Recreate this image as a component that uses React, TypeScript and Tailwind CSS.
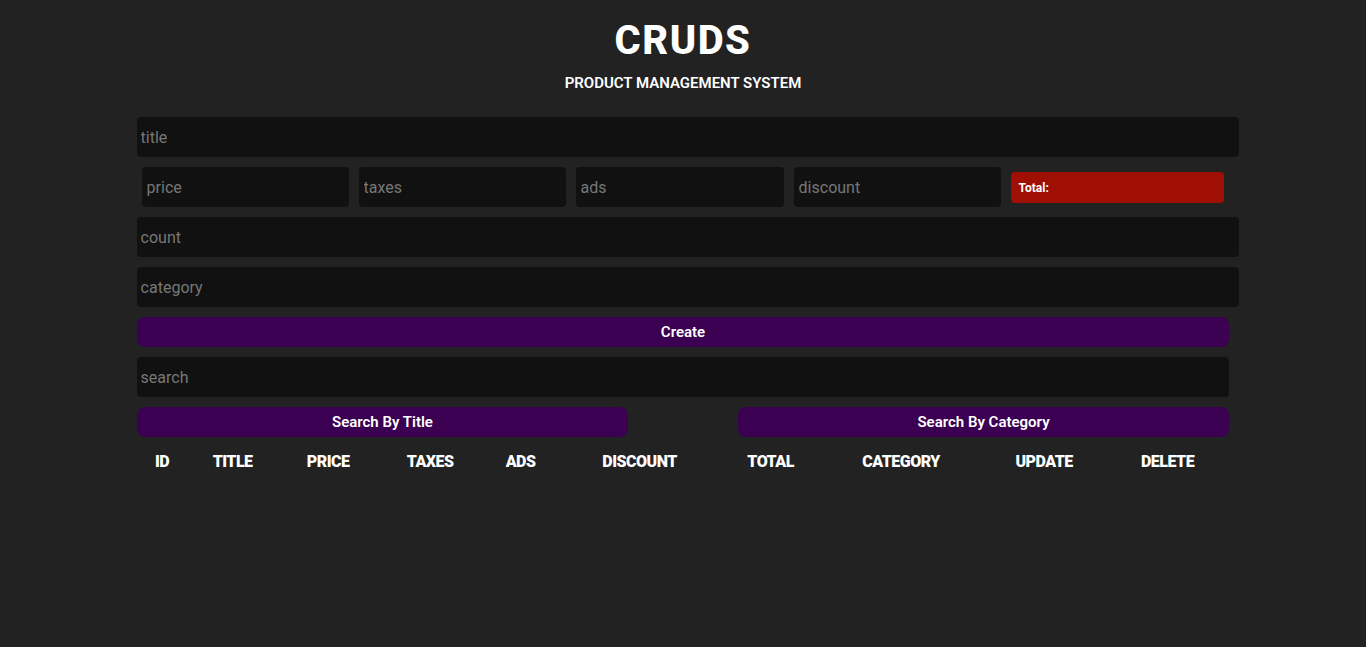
import { useState } from "react"

const cols = [
    { label: "ID", w: "w-[51px]" },
    { label: "TITLE", w: "w-[90px]" },
    { label: "PRICE", w: "w-[101px]" },
    { label: "TAXES", w: "w-[103px]" },
    { label: "ADS", w: "w-[78px]" },
    { label: "DISCOUNT", w: "w-[160px]" },
    { label: "TOTAL", w: "w-[102px]" },
    { label: "CATEGORY", w: "w-[159px]" },
    { label: "UPDATE", w: "w-[127px]" },
    { label: "DELETE", w: "w-[120px]" },
]

const inputCls = "h-10 rounded-[4px] bg-[#111111] px-1 text-base text-white placeholder:text-[#777777] outline-none"

export default function App() {
    const [search, setSearch] = useState("")

    return (
        <main className="min-h-[647px] bg-[#222222] text-white font-['Roboto',sans-serif] pt-[19px]">
            <header className="text-center">
                <h1 className="text-[40px] leading-[44px] font-extrabold tracking-[1.5px]">CRUDS</h1>
                <p className="mt-[10px] text-[15px] leading-5 font-semibold">PRODUCT MANAGEMENT SYSTEM</p>
            </header>

            <section className="w-[80%] mx-auto mt-[24px]">
                <input className={`${inputCls} w-[calc(100%+10px)]`} placeholder="title" />

                <div className="flex items-start gap-[10px] px-[5px] mt-[10px]">
                    <input className={`${inputCls} w-[207px] px-[5px]`} placeholder="price" />
                    <input className={`${inputCls} w-[207px] px-[5px]`} placeholder="taxes" />
                    <input className={`${inputCls} w-[208px] px-[5px]`} placeholder="ads" />
                    <input className={`${inputCls} w-[207px] px-[5px]`} placeholder="discount" />
                    <div className="mt-[5px] h-[31px] w-[213px] rounded-[4px] bg-[#a00f03] px-2 flex items-center text-xs font-bold">
                        Total:
                    </div>
                </div>

                <input className={`${inputCls} w-[calc(100%+10px)] mt-[10px] block`} placeholder="count" />
                <input className={`${inputCls} w-[calc(100%+10px)] mt-[10px] block`} placeholder="category" />

                <button className="mt-[10px] w-full h-[30px] rounded-lg bg-[#3b0052] text-[15px] font-semibold">
                    Create
                </button>

                <input
                    className={`${inputCls} w-full mt-[10px] block`}
                    placeholder="search"
                    value={search}
                    onChange={(e) => setSearch(e.target.value)}
                />

                <div className="flex justify-between mt-[10px]">
                    <button className="w-[45%] h-[30px] rounded-lg bg-[#3b0052] text-[15px] font-semibold">Search By Title</button>
                    <button className="w-[45%] h-[30px] rounded-lg bg-[#3b0052] text-[15px] font-semibold">Search By Category</button>
                </div>

                <div className="flex mt-[15px] h-[20px] items-center">
                    {cols.map((c) => (
                        <div key={c.label} className={`${c.w} text-center text-base font-black tracking-[-0.5px]`}>{c.label}</div>
                    ))}
                </div>
            </section>
        </main>
    )
}
